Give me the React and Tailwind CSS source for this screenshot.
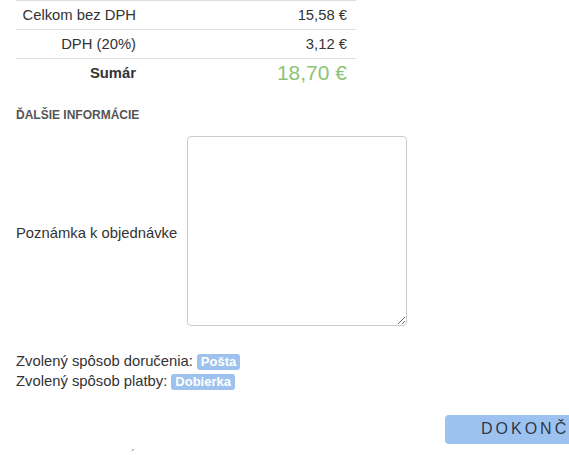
import React from "react";

const rows = [
  { label: "Celkom bez DPH", value: "15,58 €" },
  { label: "DPH (20%)", value: "3,12 €" },
];

function Badge({ children }) {
  return (
    <span className="inline-flex items-center h-[16px] ml-[4px] px-[4px] bg-[#9dc2ee] text-white font-bold text-[13px] leading-none rounded-[3px]">
      {children}
    </span>
  );
}

export default function App() {
  return (
    <div
      className="w-[569px] h-[455px] overflow-hidden bg-white text-[#333] text-[14.8px]"
      style={{ fontFamily: '"Liberation Sans", Arial, sans-serif' }}
    >
      {/* Súhrn objednávky */}
      <table className="ml-4 w-[340px] border-collapse">
        <tbody>
          {rows.map((r) => (
            <tr key={r.label} className="border-t border-[#ddd] h-[29px]">
              <td className="w-[128px] pr-2 text-right">{r.label}</td>
              <td className="pr-[9px] text-right">{r.value}</td>
            </tr>
          ))}
          <tr className="border-t border-[#ddd] h-[29px]">
            <td className="w-[128px] pr-2 text-right font-bold">Sumár</td>
            <td className="pr-[9px] text-right text-[21px] leading-[26px] text-[#8cc476]">18,70 €</td>
          </tr>
        </tbody>
      </table>

      {/* Ďalšie informácie */}
      <h4 className="ml-4 mt-[20px] text-[12px] font-bold text-[#555] uppercase leading-[14px]">
        Ďalšie informácie
      </h4>

      <div className="flex items-center ml-4 mt-[14px]">
        <label className="w-[171px] pt-[5px]">Poznámka k objednávke</label>
        <textarea className="w-[220px] h-[190px] border border-[#ccc] rounded-[4px] bg-white resize-y" />
      </div>

      <div className="ml-4 mt-[26px]">
        <div className="flex items-center h-[20px]">
          Zvolený spôsob doručenia:<Badge>Pošta</Badge>
        </div>
        <div className="flex items-center h-[20px]">
          Zvolený spôsob platby:<Badge>Dobierka</Badge>
        </div>
      </div>

      <div className="flex mt-[23px] pl-[445px]">
        <button className="shrink-0 h-[29px] pl-[36px] pr-[36px] bg-[#9dc2ef] rounded-[4px] text-[16px] tracking-[3px] text-[#2e3a48] whitespace-nowrap">
          DOKONČIŤ
        </button>
      </div>

      <div className="ml-[131px] mt-[5px] text-[12px] leading-[12px] text-[#888]">´</div>
    </div>
  );
}
